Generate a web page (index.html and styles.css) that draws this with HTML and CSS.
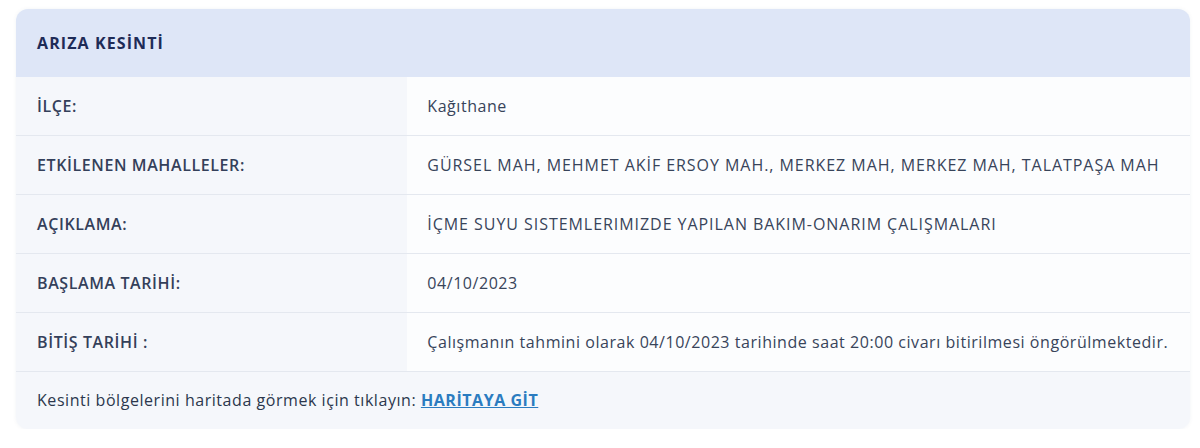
FILE: index.html
```html
<!DOCTYPE html>
<html lang="tr">
<head>
    <title>Arıza Kesinti</title>
    <meta charset="UTF-8">
    <meta name="viewport" content="width=device-width, initial-scale=1.0">
    <link rel="stylesheet" href="styles.css">
</head>
<body>
    <div class="card">
        <div class="card-header">ARIZA KESİNTİ</div>

        <div class="info-table">
            <div class="label">İLÇE:</div>
            <div class="value">Kağıthane</div>

            <div class="label">ETKİLENEN MAHALLELER:</div>
            <div class="value caps">GÜRSEL MAH, MEHMET AKİF ERSOY MAH., MERKEZ MAH, MERKEZ MAH, TALATPAŞA MAH</div>

            <div class="label">AÇIKLAMA:</div>
            <div class="value caps">İÇME SUYU SISTEMLERIMIZDE YAPILAN BAKIM-ONARIM ÇALIŞMALARI</div>

            <div class="label">BAŞLAMA TARİHİ:</div>
            <div class="value">04/10/2023</div>

            <div class="label">BİTİŞ TARİHİ :</div>
            <div class="value">Çalışmanın tahmini olarak 04/10/2023 tarihinde saat 20:00 civarı bitirilmesi öngörülmektedir.</div>
        </div>

        <div class="card-footer">
            Kesinti bölgelerini haritada görmek için tıklayın: <a class="map-link" href="#">HARİTAYA GİT</a>
        </div>
    </div>
</body>
</html>
```

FILE: styles.css
```css
body {
    font-family: "Open Sans", "Noto Sans", sans-serif;
    margin: 0;
    padding: 9px 10px 0 16px;
    background-color: #ffffff;
    color: #2f3a4f;
}
.card {
    border-radius: 12px;
    overflow: hidden;
    background-color: #f5f7fb;
    box-shadow: 0 0 4px rgba(40, 60, 100, 0.06);
}
.card-header {
    background-color: #dee6f7;
    color: #1e2b57;
    font-weight: 700;
    font-size: 16px;
    letter-spacing: 1.1px;
    height: 68px;
    line-height: 68px;
    padding: 0 21px;
}
.info-table {
    display: grid;
    grid-template-columns: 1fr 2fr;
}
.info-table .label,
.info-table .value {
    height: 58px;
    line-height: 58px;
    font-size: 16px;
    border-bottom: 1px solid #e4e8ef;
    white-space: nowrap;
}
.info-table .label {
    background-color: #f5f7fb;
    padding-left: 21px;
    font-weight: 600;
    letter-spacing: 0.6px;
    color: #34405a;
}
.info-table .value {
    background-color: #fcfdfe;
    padding-left: 20px;
    letter-spacing: 0.55px;
    color: #38445a;
}
.info-table .value.caps {
    letter-spacing: 0.95px;
}
.card-footer {
    height: 57px;
    line-height: 57px;
    padding: 0 21px;
    font-size: 16px;
    letter-spacing: 0.55px;
    color: #2c374d;
}
.map-link {
    color: #2b7cc0;
    font-weight: 700;
    text-decoration: underline;
}
```
